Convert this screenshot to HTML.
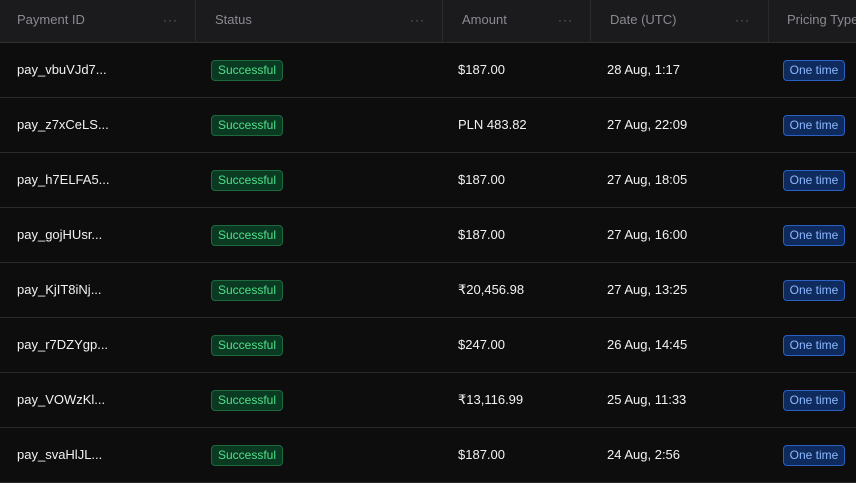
<html><head><style>
body{margin:0;width:856px;height:483px;background:#0d0d0e;font-family:"Liberation Sans",sans-serif;overflow:hidden;position:relative}
.h{position:absolute;left:0;top:0;width:856px;height:42px;background:#1b1b1e;border-bottom:1px solid #303033}
.hc{position:absolute;top:0;height:42px;line-height:40px;font-size:13px;color:#8a8a90}
.d{position:absolute;top:0;width:1px;height:42px;background:#2b2b2e}
.dots{position:absolute;top:0;line-height:40px;color:#6a6a70;font-size:12px;letter-spacing:1px}
.r{position:absolute;left:0;width:856px;height:54px;border-bottom:1px solid #2a2a2c}
.c{position:absolute;top:0;line-height:54px;font-size:13px;color:#f2f2f2}
.s{position:absolute;left:211px;top:17px;width:70px;height:19px;border:1px solid #1c6a3e;background:#0b3a22;color:#4ee08a;border-radius:4px;font-size:12px;line-height:19px;text-align:center}
.o{position:absolute;left:783px;top:17px;width:60px;height:19px;border:1px solid #2a5fc4;background:#0f2a5c;color:#8db8ff;border-radius:4px;font-size:12px;line-height:19px;text-align:center}
</style></head><body>
<div class="h">
<div class="hc" style="left:17px">Payment ID</div><div class="dots" style="left:163px">···</div><div class="d" style="left:195px"></div>
<div class="hc" style="left:215px">Status</div><div class="dots" style="left:410px">···</div><div class="d" style="left:442px"></div>
<div class="hc" style="left:462px">Amount</div><div class="dots" style="left:558px">···</div><div class="d" style="left:590px"></div>
<div class="hc" style="left:610px">Date (UTC)</div><div class="dots" style="left:735px">···</div><div class="d" style="left:768px"></div>
<div class="hc" style="left:787px;white-space:nowrap">Pricing Type</div>
</div>
<div class="r" style="top:43px"><div class="c" style="left:17px">pay_vbuVJd7...</div><div class="s">Successful</div><div class="c" style="left:458px">$187.00</div><div class="c" style="left:607px">28 Aug, 1:17</div><div class="o">One time</div></div>
<div class="r" style="top:98px"><div class="c" style="left:17px">pay_z7xCeLS...</div><div class="s">Successful</div><div class="c" style="left:458px">PLN 483.82</div><div class="c" style="left:607px">27 Aug, 22:09</div><div class="o">One time</div></div>
<div class="r" style="top:153px"><div class="c" style="left:17px">pay_h7ELFA5...</div><div class="s">Successful</div><div class="c" style="left:458px">$187.00</div><div class="c" style="left:607px">27 Aug, 18:05</div><div class="o">One time</div></div>
<div class="r" style="top:208px"><div class="c" style="left:17px">pay_gojHUsr...</div><div class="s">Successful</div><div class="c" style="left:458px">$187.00</div><div class="c" style="left:607px">27 Aug, 16:00</div><div class="o">One time</div></div>
<div class="r" style="top:263px"><div class="c" style="left:17px">pay_KjIT8iNj...</div><div class="s">Successful</div><div class="c" style="left:458px">₹20,456.98</div><div class="c" style="left:607px">27 Aug, 13:25</div><div class="o">One time</div></div>
<div class="r" style="top:318px"><div class="c" style="left:17px">pay_r7DZYgp...</div><div class="s">Successful</div><div class="c" style="left:458px">$247.00</div><div class="c" style="left:607px">26 Aug, 14:45</div><div class="o">One time</div></div>
<div class="r" style="top:373px"><div class="c" style="left:17px">pay_VOWzKl...</div><div class="s">Successful</div><div class="c" style="left:458px">₹13,116.99</div><div class="c" style="left:607px">25 Aug, 11:33</div><div class="o">One time</div></div>
<div class="r" style="top:428px"><div class="c" style="left:17px">pay_svaHlJL...</div><div class="s">Successful</div><div class="c" style="left:458px">$187.00</div><div class="c" style="left:607px">24 Aug, 2:56</div><div class="o">One time</div></div>
</body></html>
